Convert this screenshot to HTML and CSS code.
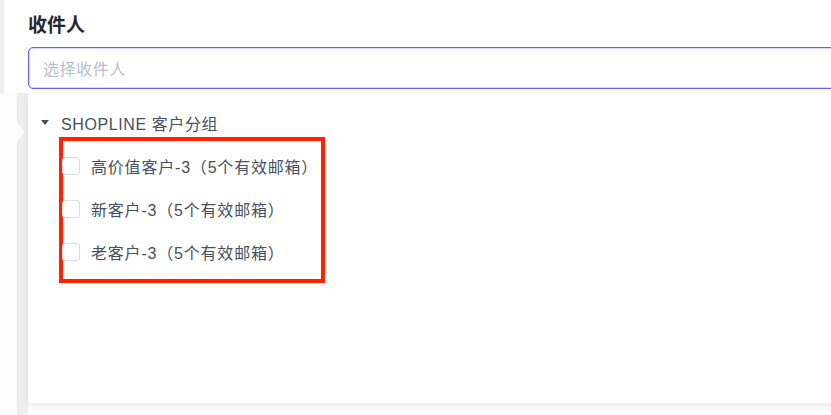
FILE: index.html
```
<!DOCTYPE html>
<html lang="zh-CN">
<head>
    <meta charset="UTF-8">
    <title>收件人</title>
    <link rel="stylesheet" href="styles.css">
</head>
<body>
    <div class="page">
        <div class="form">
            <div class="label">收件人</div>
            <div class="select">
                <span class="placeholder">选择收件人</span>
            </div>
        </div>

        <div class="lower">
            <div class="side"></div>

            <div class="dropdown">
                <div class="tree-node">
                    <span class="caret"></span>
                    <span>SHOPLINE 客户分组</span>
                </div>

                <div class="group">
                    <label class="option">
                        <span class="checkbox"></span>
                        <span>高价值客户-3（5个有效邮箱）</span>
                    </label>
                    <label class="option">
                        <span class="checkbox"></span>
                        <span>新客户-3（5个有效邮箱）</span>
                    </label>
                    <label class="option">
                        <span class="checkbox"></span>
                        <span>老客户-3（5个有效邮箱）</span>
                    </label>
                </div>
            </div>
        </div>
    </div>
</body>
</html>
```

FILE: styles.css
```
html, body {
    margin: 0;
    padding: 0;
    background: #ffffff;
    overflow: hidden;
}
body {
    font-family: "Liberation Sans", "Noto Sans CJK SC", sans-serif;
    color: #474f5e;
    font-size: 16px;
}
.page {
    width: 831px;
    height: 415px;
}
.form {
    height: 93px;
    border-left: 4px solid #eef0f4;
    padding: 13px 0 0 24px;
    box-sizing: border-box;
    background: #ffffff;
}
.label {
    font-size: 19px;
    line-height: 26px;
    font-weight: bold;
    color: #242833;
}
.select {
    margin-top: 8px;
    margin-right: -20px;
    height: 42px;
    box-sizing: border-box;
    border: 1px solid #6b5cf3;
    border-radius: 5px;
    box-shadow: inset 0 0 0 1px rgba(107, 92, 243, 0.25);
    padding: 0 14px;
    display: flex;
    align-items: center;
}
.placeholder {
    color: #b9bdc8;
    font-size: 16px;
    letter-spacing: 0.6px;
}
.lower {
    display: flex;
    height: 322px;
    background: linear-gradient(to right, #ffffff 0, #ffffff 17px, #efeff0 17px, #efeff0 28px, #ffffff 28px);
}
.side {
    position: relative;
    width: 17px;
    flex-shrink: 0;
    background: #fcfcfc;
    border-top-right-radius: 5px;
    box-shadow: 1px 0 3px rgba(0, 0, 0, 0.04);
}
.side::after {
    content: "";
    position: absolute;
    left: 17px;
    top: 30px;
    width: 0;
    height: 0;
    border-top: 9px solid transparent;
    border-bottom: 9px solid transparent;
    border-left: 8px solid #fcfcfc;
}
.dropdown {
    flex: 1;
    margin: 0 -20px 0 11px;
    height: 310px;
    background: #ffffff;
    border-radius: 4px;
    box-shadow: 0 3px 8px rgba(0, 0, 0, 0.09);
    padding-top: 15px;
    box-sizing: border-box;
}
.tree-node {
    height: 29px;
    display: flex;
    align-items: center;
    padding-left: 13px;
    gap: 12px;
    letter-spacing: 0.6px;
}
.caret {
    width: 0;
    height: 0;
    border-left: 4px solid transparent;
    border-right: 4px solid transparent;
    border-top: 5px solid #474f5e;
}
.group {
    width: 266px;
    box-sizing: border-box;
    margin-left: 31px;
    border: 4px solid #ff2200;
    padding: 3px 0 6px;
}
.option {
    height: 43px;
    display: flex;
    align-items: center;
    gap: 11px;
    white-space: nowrap;
    letter-spacing: 0.8px;
}
.checkbox {
    width: 16px;
    height: 16px;
    border: 1px solid #d8dce6;
    border-radius: 3px;
    background: #ffffff;
    margin-left: -1px;
}
```
